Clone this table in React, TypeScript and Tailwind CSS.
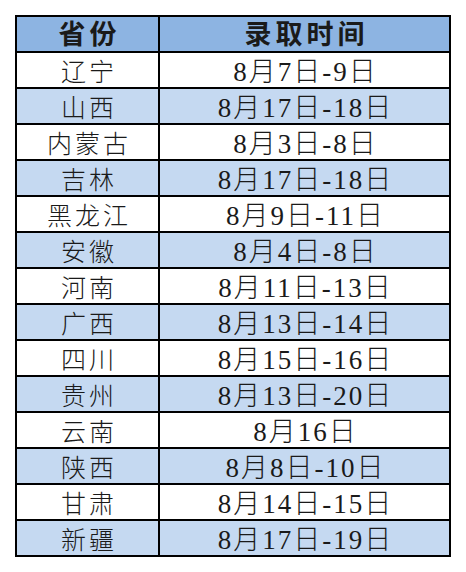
const rows = [
  ["辽宁", "8月7日-9日"],
  ["山西", "8月17日-18日"],
  ["内蒙古", "8月3日-8日"],
  ["吉林", "8月17日-18日"],
  ["黑龙江", "8月9日-11日"],
  ["安徽", "8月4日-8日"],
  ["河南", "8月11日-13日"],
  ["广西", "8月13日-14日"],
  ["四川", "8月15日-16日"],
  ["贵州", "8月13日-20日"],
  ["云南", "8月16日"],
  ["陕西", "8月8日-10日"],
  ["甘肃", "8月14日-15日"],
  ["新疆", "8月17日-19日"],
];

const font = { fontFamily: '"Liberation Serif", "Noto Sans CJK SC", serif' };

export default function App() {
  return (
    <div className="w-[466px] h-[572px] bg-white pt-[15px] pl-[15px]" style={font}>
      <div className="w-[436px] border-x-2 border-t-2 border-black text-[#1a1a1a]">
        <div className="flex h-[36px] bg-[#8db4e2] border-b-2 border-black leading-none">
          <div className="w-[143px] shrink-0 flex items-center justify-center border-r-2 border-black text-[27px] font-bold tracking-[4px] pl-[4px] pt-[2px]">
            省份
          </div>
          <div className="flex-1 flex items-center justify-center text-[27px] font-bold tracking-[4px] pl-[4px] pt-[2px]">
            录取时间
          </div>
        </div>
        {rows.map(([prov, date], i) => (
          <div
            key={prov}
            className={
              "flex h-[36px] border-b-2 border-black leading-none " +
              (i % 2 === 1 ? "bg-[#c5d9f1]" : "bg-white")
            }
          >
            <div className="w-[143px] shrink-0 flex items-center justify-center border-r-2 border-black text-[25px] font-light tracking-[3px] pl-[3px] pt-[4px]">
              {prov}
            </div>
            <div className="flex-1 flex items-center justify-center text-[27px] font-light tracking-[2px] pl-[2px] pt-[4px]">
              {date}
            </div>
          </div>
        ))}
      </div>
    </div>
  );
}
